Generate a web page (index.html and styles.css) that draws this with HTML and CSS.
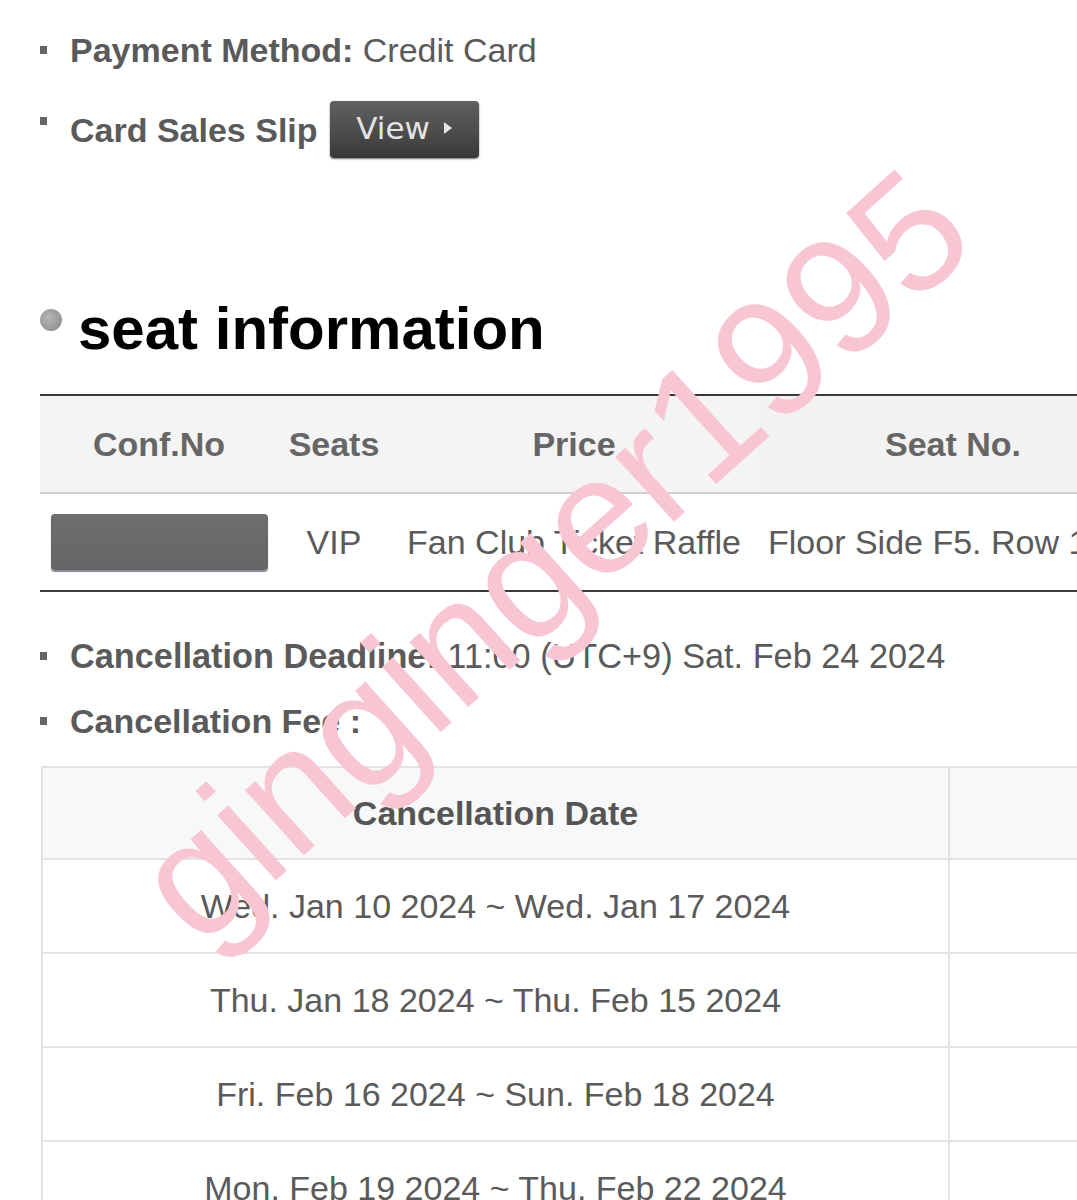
FILE: index.html
```html
<!DOCTYPE html>
<html lang="en">
<head>
<meta charset="utf-8">
<title>Seat information</title>
<link rel="stylesheet" href="styles.css">
</head>
<body>
<div class="page">
  <div class="info-item first">
    <span class="sq"></span>
    <span class="label">Payment Method:</span>&nbsp;<span class="value">Credit Card</span>
  </div>
  <div class="info-item slip">
    <span class="sq sq-high"></span>
    <span class="label">Card Sales Slip</span>
    <span class="view-btn">View<span class="tri"></span></span>
  </div>

  <h2 class="section-title"><span class="dot"></span><span>seat information</span></h2>

  <div class="clip">
    <table class="seat-table">
      <colgroup>
        <col class="c1"><col class="c2"><col class="c3"><col class="c4">
      </colgroup>
      <thead>
        <tr><th>Conf.No</th><th>Seats</th><th>Price</th><th>Seat No.</th></tr>
      </thead>
      <tbody>
        <tr>
          <td><span class="redact"></span></td>
          <td>VIP</td>
          <td>Fan Club Ticket Raffle</td>
          <td>Floor Side F5. Row 1</td>
        </tr>
      </tbody>
    </table>
  </div>

  <div class="info-item deadline">
    <span class="sq"></span>
    <span class="label">Cancellation Deadline:</span>&nbsp;<span class="value">11:00 (UTC+9) Sat. Feb 24 2024</span>
  </div>
  <div class="info-item fee">
    <span class="sq"></span>
    <span class="label">Cancellation Fee :</span>
  </div>

  <div class="clip">
    <table class="fee-table">
      <colgroup><col class="f1"><col class="f2"></colgroup>
      <thead>
        <tr><th>Cancellation Date</th><th></th></tr>
      </thead>
      <tbody>
        <tr><td>Wed. Jan 10 2024 ~ Wed. Jan 17 2024</td><td></td></tr>
        <tr><td>Thu. Jan 18 2024 ~ Thu. Feb 15 2024</td><td></td></tr>
        <tr><td>Fri. Feb 16 2024 ~ Sun. Feb 18 2024</td><td></td></tr>
        <tr><td>Mon. Feb 19 2024 ~ Thu. Feb 22 2024</td><td></td></tr>
      </tbody>
    </table>
  </div>

  <div class="watermark">ginginger1995</div>
</div>
</body>
</html>
```

FILE: styles.css
```css
html, body {
  margin: 0;
  padding: 0;
  background: #ffffff;
  overflow: hidden;
}

body {
  font-family: "Liberation Sans", Arial, sans-serif;
  color: #555555;
}

.page {
  position: relative;
  width: 1077px;
  height: 1200px;
  overflow: hidden;
  padding-left: 40px;
  box-sizing: border-box;
}

.info-item {
  display: flex;
  align-items: center;
  font-size: 34px;
  line-height: 40px;
  height: 40px;
  white-space: nowrap;
}

.info-item.first { padding-top: 30px; }
.info-item.slip { margin-top: 31px; height: 57px; }
.info-item.deadline { margin-top: 44px; font-size: 34.3px; }
.info-item.fee { margin-top: 25px; }

.sq {
  width: 7px;
  height: 8px;
  background: #666666;
  margin-right: 23px;
  flex: none;
}

.sq-high { align-self: flex-start; margin-top: 16px; }

.label {
  font-weight: bold;
  color: #5a5a5a;
}

.value {
  color: #5a5a5a;
}

.view-btn {
  display: inline-flex;
  align-items: center;
  justify-content: center;
  margin-left: 12px;
  width: 149px;
  height: 57px;
  box-sizing: border-box;
  border-radius: 4px;
  background: linear-gradient(#606060, #4a4a4a 60%, #383838);
  box-shadow: 0 1px 2px rgba(0, 0, 0, 0.55);
  color: #e4e4e4;
  font-family: "DejaVu Sans", sans-serif;
  font-size: 31px;
  padding-bottom: 4px;
}

.tri {
  display: inline-block;
  width: 0;
  height: 0;
  margin-left: 14px;
  border-top: 6px solid transparent;
  border-bottom: 6px solid transparent;
  border-left: 8px solid #e4e4e4;
}

.section-title {
  display: flex;
  align-items: flex-start;
  margin: 136px 0 0 0;
  height: 70px;
  font-size: 60px;
  line-height: 70px;
  font-weight: bold;
  color: #000000;
}

.dot {
  width: 22px;
  height: 22px;
  margin-top: 15px;
  margin-right: 16px;
  border-radius: 50%;
  background: radial-gradient(circle at 40% 40%, #b5b5b5, #999999 60%, #8a8a8a);
  flex: none;
}

.clip {
  width: 1037px;
  overflow: hidden;
}

.seat-table {
  margin-top: 30px;
  width: 1108px;
  table-layout: fixed;
  border-collapse: collapse;
  font-size: 34px;
}

.seat-table col.c1 { width: 238px; }
.seat-table col.c2 { width: 112px; }
.seat-table col.c3 { width: 368px; }
.seat-table col.c4 { width: 390px; }

.seat-table th {
  height: 96px;
  padding: 0;
  background: #f4f4f4;
  border-top: 2px solid #3a3a3a;
  border-bottom: 2px solid #cfcfcf;
  color: #666666;
  font-weight: bold;
  text-align: center;
  white-space: nowrap;
}

.seat-table th:nth-child(4) {
  background: #f2f2f2;
}

.seat-table td {
  height: 96px;
  padding: 0;
  border-bottom: 2px solid #3a3a3a;
  color: #5a5a5a;
  text-align: center;
  white-space: nowrap;
  overflow: hidden;
}

.seat-table td:nth-child(4) {
  text-align: left;
  padding-left: 10px;
}

.redact {
  display: block;
  margin: 0 auto;
  width: 217px;
  height: 56px;
  border-radius: 4px;
  background: linear-gradient(#6e6e70, #656567);
  box-shadow: 0 2px 1px rgba(40, 40, 60, 0.55);
}

.fee-table {
  margin-top: 25px;
  margin-left: 1px;
  width: 1200px;
  table-layout: fixed;
  border-collapse: collapse;
  font-size: 34px;
}

.fee-table col.f1 { width: 907px; }
.fee-table col.f2 { width: 293px; }

.fee-table th,
.fee-table td {
  border: 2px solid #e2e2e2;
  padding: 0;
  text-align: center;
  white-space: nowrap;
}

.fee-table th {
  height: 90px;
  background: #f7f8fa;
  font-weight: bold;
  color: #555555;
}

.fee-table td {
  height: 92px;
  color: #5a5a5a;
}

.watermark {
  position: absolute;
  left: 552px;
  top: 555px;
  transform: translate(-50%, -50%) rotate(-42deg);
  font-family: "Liberation Sans", Arial, sans-serif;
  font-size: 166px;
  line-height: 1;
  color: #f8c6d3;
  white-space: nowrap;
  pointer-events: none;
}
```
